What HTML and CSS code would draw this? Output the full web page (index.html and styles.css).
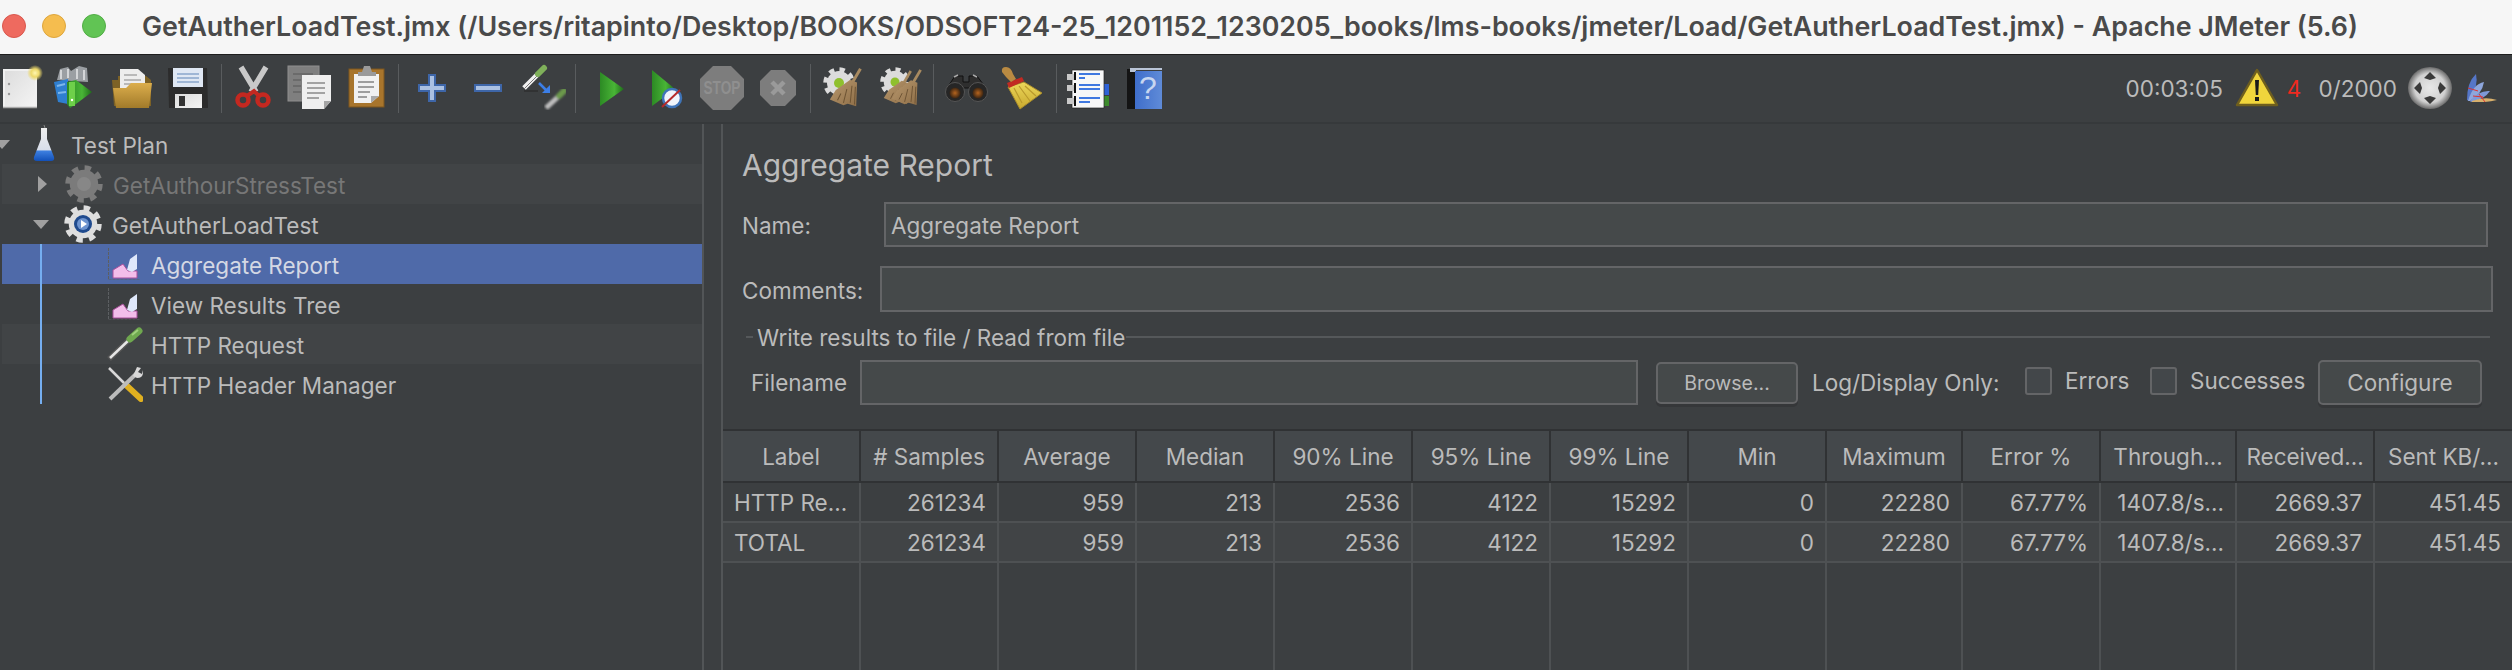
FILE: index.html
```html
<!DOCTYPE html>
<html lang="en">
<head>
  <meta charset="UTF-8" />
  <title>GetAutherLoadTest.jmx - Apache JMeter (5.6)</title>
  <link rel="stylesheet" href="styles.css">
</head>
<body>

  <!-- shared gradients and repeated icons -->
  <svg class="defs" width="0" height="0" aria-hidden="true">
    <defs>
      <linearGradient id="gPaper" x1="0" y1="0" x2="1" y2="1"><stop offset="0" stop-color="#dcdcdc"/><stop offset="1" stop-color="#f4f4f4"/></linearGradient>
      <linearGradient id="gFolder" x1="0" y1="0" x2="0" y2="1"><stop offset="0" stop-color="#dcae4c"/><stop offset="1" stop-color="#a17a2a"/></linearGradient>
      <linearGradient id="gGreen" x1="0" y1="0" x2="1" y2="0"><stop offset="0" stop-color="#2c8a24"/><stop offset=".6" stop-color="#49b536"/><stop offset="1" stop-color="#1e6a1a"/></linearGradient>
      <linearGradient id="gBook" x1="0" y1="0" x2="1" y2="0"><stop offset="0" stop-color="#3f6ecb"/><stop offset="1" stop-color="#5f8bd8"/></linearGradient>
      <linearGradient id="gBristle" x1="0" y1="0" x2="0" y2="1"><stop offset="0" stop-color="#ecd75a"/><stop offset="1" stop-color="#c9a92e"/></linearGradient>
      <linearGradient id="gWood" x1="0" y1="0" x2="1" y2="1"><stop offset="0" stop-color="#b8986e"/><stop offset="1" stop-color="#8f6f48"/></linearGradient>
      <linearGradient id="gFlask" x1="0" y1="0" x2="0" y2="1"><stop offset="0" stop-color="#eeeeee"/><stop offset=".66" stop-color="#d8deea"/><stop offset=".7" stop-color="#3d7fe0"/><stop offset="1" stop-color="#1250b8"/></linearGradient>
      <radialGradient id="gGlow"><stop offset="0" stop-color="#fff6b0"/><stop offset=".5" stop-color="#ecd86a"/><stop offset="1" stop-color="#ecd86a" stop-opacity="0"/></radialGradient>
      <radialGradient id="gDisc"><stop offset="0" stop-color="#e8e8e8"/><stop offset=".7" stop-color="#d0d0d0"/><stop offset="1" stop-color="#6a6a6a"/></radialGradient>
      <radialGradient id="gLens"><stop offset="0" stop-color="#b5641e"/><stop offset="1" stop-color="#3a2412"/></radialGradient>
      <filter id="fBlur"><feGaussianBlur stdDeviation=".9"/></filter>

      <symbol id="iChart" viewBox="0 0 32 32">
        <path d="M.5 0V32H32" fill="none" stroke="#5c5f62" stroke-width="1" stroke-dasharray="3 1"/>
        <path d="M5 22 15 16 20 23H29V30H5Z" fill="#f2bdea" stroke="#a94f9c" stroke-width="1"/>
        <path d="M19 22 22 11 29 6V21L24 24Z" fill="#dfe8fb"/>
      </symbol>
      <symbol id="iPipette" viewBox="0 0 36 36">
        <path d="M2 33 24 12" stroke="#555" stroke-width="5.500"/>
        <path d="M3 32 24 12" stroke="#e6e6e6" stroke-width="2.500"/>
        <path d="M23 13 32 5" stroke="#6fa84f" stroke-width="7" stroke-linecap="round"/>
        <path d="M25 9 31 4" stroke="#9fcf7c" stroke-width="2"/>
      </symbol>
      <symbol id="iGear" viewBox="0 0 36 36">
        <circle cx="18" cy="18" r="15" fill="none" stroke="currentColor" stroke-width="5.500" stroke-dasharray="5.9 5.9"/>
        <circle cx="18" cy="18" r="13.500" fill="currentColor"/>
      </symbol>
      <symbol id="iBroom" viewBox="0 0 40 46">
        <path d="M27 18 37 1" stroke="#a88a60" stroke-width="3.500"/>
        <path d="M8 26 25 14 33 17 32 45 22 42 17 44 1 37Z" fill="url(#gWood)"/>
        <path d="M14 30 10 38M21 25 17 41M27 21 25 41M31 22 30 43" stroke="#6e5434" stroke-width="1.200" fill="none"/>
      </symbol>
    </defs>
  </svg>

  <header class="titlebar">
    <span class="light red"></span>
    <span class="light yellow"></span>
    <span class="light green"></span>
    <span class="window-title">GetAutherLoadTest.jmx (/Users/ritapinto/Desktop/BOOKS/ODSOFT24-25_1201152_1230205_books/lms-books/jmeter/Load/GetAutherLoadTest.jmx) - Apache JMeter (5.6)</span>
  </header>

  <div class="toolbar">
    <div class="tools first">
      <svg class="tool" viewBox="0 0 58 60"><rect x="16" y="12" width="32" height="37" fill="url(#gPaper)" stroke="#f0f0f0" stroke-width="2"/><path d="M15 49.500H49" stroke="#aaa" stroke-width="1.500"/><circle cx="21" cy="26" r="1.200" fill="#999"/><circle cx="21" cy="36" r="1.200" fill="#999"/><circle cx="47" cy="15" r="8" fill="url(#gGlow)"/></svg>
      <svg class="tool" viewBox="0 0 58 60"><path d="M11 22 14 11 22 9 25 13 33 8 41 10 42 24Z" fill="#9b9fa3"/><path d="M15 12V21M22 11V20M31 11V21M38 12V22" stroke="#d4d6d8" stroke-width="2"/><path d="M8 24 22 21V46L12 44Z" fill="#2f7fd0"/><path d="M11 28 19 26M12 35 20 34" stroke="#7db6ea" stroke-width="2"/><path d="M21 24 30 22 46 34 30 46 24 50 21 46Z" fill="url(#gGreen)"/><rect x="23" y="24" width="6" height="24" fill="#6ed04a"/><circle cx="26" cy="42" r="1.200" fill="#fff"/></svg>
      <svg class="tool" viewBox="0 0 58 60"><path d="M8 22H14V18H42L47 22V48H10Z" fill="#7d6226"/><path d="M16 11H34L41 17V32H16Z" fill="#ededed"/><path d="M20 17H33M20 22H37M20 26H37" stroke="#a8a8a8" stroke-width="1.500"/><path d="M9 30H22L27 25H48L45 50H12Z" fill="url(#gFolder)"/></svg>
      <svg class="tool" viewBox="0 0 58 60"><path d="M6 10H45L46 50H7Z" fill="#2c2c2c"/><rect x="11" y="10" width="30" height="19" fill="#dfe7f3"/><path d="M15 16H37M15 20H37M15 24H37" stroke="#8ba6cc" stroke-width="1.300"/><path d="M13 36H40V50H13Z" fill="url(#gPaper)"/><rect x="17" y="38" width="6" height="10" fill="#333"/></svg>
    </div>
    <i class="tool-sep"></i>
    <div class="tools">
      <svg class="tool" viewBox="0 0 58 60"><path d="M18 9 33 34M43 9 28 34" stroke="#c9c9c9" stroke-width="5.500"/><circle cx="20" cy="42" r="5.500" fill="none" stroke="#c42820" stroke-width="4.500"/><circle cx="40" cy="42" r="5.500" fill="none" stroke="#c42820" stroke-width="4.500"/><path d="M24 38 31 33 36 38" fill="none" stroke="#c42820" stroke-width="4"/></svg>
      <svg class="tool" viewBox="0 0 58 60"><rect x="7" y="8" width="31" height="35" fill="#7f7f7f" stroke="#8f8f8f"/><path d="M12 16H32M12 22H20M12 28H20M12 34H20" stroke="#666" stroke-width="1.500"/><path d="M21 17H50V43L43 51H21Z" fill="#efefef"/><path d="M50 43H43V51Z" fill="#a5a5a5"/><path d="M26 25H44M26 30H44M26 35H44M26 40H38" stroke="#a3a3a3" stroke-width="1.800"/></svg>
      <svg class="tool" viewBox="0 0 58 60"><rect x="10" y="11" width="35" height="38" fill="#a8752c" stroke="#7d561f"/><path d="M15 16H40V38L32 45H15Z" fill="#f1f1f1"/><path d="M40 38H32V45Z" fill="#a9a9a9"/><path d="M19 24H35M19 29H35M19 34H31M19 39H28" stroke="#9e9e9e" stroke-width="1.800"/><path d="M19 18V14H23L25 8H31L33 14H37V18Z" fill="#9a9a9a"/></svg>
    </div>
    <i class="tool-sep"></i>
    <div class="tools">
      <svg class="tool" viewBox="0 0 58 60"><path d="M29 17H35V27H45V33H35V43H29V33H19V27H29Z" fill="#abc1e2" stroke="#3e66a8" stroke-width="2"/></svg>
      <svg class="tool" viewBox="0 0 58 60"><rect x="17" y="27" width="26" height="6" fill="#abc1e2" stroke="#3e66a8" stroke-width="2"/></svg>
      <svg class="tool" viewBox="0 0 58 60"><path d="M8 30 22 16" stroke="#f0f0f0" stroke-width="5"/><path d="M8 31 21 18" stroke="#777" stroke-width="1"/><path d="M22 16 28 10" stroke="#7fb05a" stroke-width="6" stroke-linecap="round"/><path d="M8 33H22" stroke="#2b2b2b" stroke-width="2" opacity=".6"/><path d="M23 25 31 33" stroke="#3c7fe8" stroke-width="2.500"/><path d="M26 35H34V27Z" fill="#3c7fe8"/><g filter="url(#fBlur)"><path d="M30 50 43 38" stroke="#bdbdbd" stroke-width="5"/><path d="M43 38 48 33" stroke="#6c9a4c" stroke-width="6" stroke-linecap="round"/></g></svg>
    </div>
    <i class="tool-sep"></i>
    <div class="tools">
      <svg class="tool" viewBox="0 0 58 60"><path d="M23 14 47 31 23 48Z" fill="url(#gGreen)"/></svg>
      <svg class="tool" viewBox="0 0 58 60"><path d="M17 12 40 31 17 48Z" fill="url(#gGreen)"/><circle cx="37" cy="40" r="9" fill="#f0f4fa" stroke="#3f74b8" stroke-width="2.500"/><path d="M27 49 45 32" stroke="#b52a2a" stroke-width="2"/></svg>
      <svg class="tool" viewBox="0 0 58 60"><path d="M20 8H38L51 21V39L38 52H20L7 39V21Z" fill="#7d7d7d"/><text class="stop-text" x="29" y="36" textLength="37" lengthAdjust="spacingAndGlyphs">STOP</text></svg>
      <svg class="tool" viewBox="0 0 58 60"><path d="M20 12H34L45 23V37L34 48H20L9 37V23Z" fill="#7d7d7d"/><path d="M21 24 33 36M33 24 21 36" stroke="#9a9a9a" stroke-width="4.500"/></svg>
    </div>
    <i class="tool-sep"></i>
    <div class="tools wide">
      <svg class="tool" viewBox="0 0 60 60"><use href="#iGear" x="11" y="9" width="32" height="32" color="#dcdcdc"/><circle cx="27" cy="25" r="5" fill="#8fc02e"/><use href="#iBroom" x="17" y="7" width="34" height="45"/></svg>
      <svg class="tool" viewBox="0 0 60 60"><use href="#iGear" x="8" y="9" width="30" height="30" color="#dcdcdc"/><circle cx="23" cy="24" r="4.500" fill="#8fc02e"/><use href="#iBroom" x="11" y="7" width="30" height="45"/><use href="#iBroom" x="19" y="7" width="32" height="45"/></svg>
    </div>
    <i class="tool-sep"></i>
    <div class="tools wide">
      <svg class="tool" viewBox="0 0 60 60"><path d="M12 30 20 18H28V24H34V18H42L51 30Z" fill="#2e2e2e" stroke="#111"/><path d="M19 19 23 17M38 17 42 19" stroke="#aaa" stroke-width="1.500"/><circle cx="20" cy="34" r="9.500" fill="#262626" stroke="#555"/><circle cx="43" cy="34" r="9.500" fill="#262626" stroke="#555"/><circle cx="20" cy="35" r="5.500" fill="url(#gLens)"/><circle cx="43" cy="35" r="5.500" fill="url(#gLens)"/></svg>
      <svg class="tool" viewBox="0 0 60 60"><path d="M25 51 47 35 29 24 13 29Z" fill="url(#gBristle)" stroke="#a98c2a"/><path d="M19 30 27 45M24 28 35 43M30 28 41 38" stroke="#b9992c" stroke-width="1.200"/><path d="M12 25 27 19 29 23 14 30Z" fill="#c22a22"/><path d="M7 14Q6 9 11 9 16 9 18 16L21 21 16 24 11 19Z" fill="#b98a42"/></svg>
    </div>
    <i class="tool-sep"></i>
    <div class="tools wide">
      <svg class="tool" viewBox="0 0 60 60"><rect x="46" y="26" width="5" height="11" fill="#2f62d6"/><rect x="46" y="38" width="5" height="10" fill="#3c8a2c"/><rect x="14" y="12" width="32" height="38" fill="#f7f7f7"/><path d="M14 12H46V50H14Z" fill="none" stroke="#222" stroke-width=".7"/><rect x="9" y="16" width="8" height="6" fill="#c9c9c9"/><rect x="9" y="27" width="8" height="6" fill="#c9c9c9"/><rect x="9" y="40" width="8" height="6" fill="#c9c9c9"/><path d="M17 14V22M17 25V35M17 38V48" stroke="#111" stroke-width="2"/><path d="M21 16H42M21 20H27M21 27H42M21 31H42M21 40H42M21 44H32" stroke="#3f78e0" stroke-width="2"/></svg>
      <svg class="tool" viewBox="0 0 60 60"><rect x="9" y="11" width="9" height="40" fill="#141414"/><path d="M12 10H44V12H18V14H12Z" fill="#b9c4d6"/><rect x="17" y="13" width="27" height="38" fill="url(#gBook)"/><text class="help-text" x="30" y="41">?</text></svg>
    </div>

    <div class="status">
      <span class="timer">00:03:05</span>
      <svg class="warn-icon" viewBox="0 0 44 40"><path d="M22 2 42 37H2Z" fill="#f0d53c" stroke="#6e5e1e" stroke-width="2.500" stroke-linejoin="round"/><path d="M20 12H24L23.200 27H20.800Z" fill="#1a1a1a"/><rect x="20" y="29" width="4" height="4" fill="#1a1a1a"/></svg>
      <span class="err-count">4</span>
      <span class="threads">0/2000</span>
      <svg class="loop-icon" viewBox="0 0 44 42"><ellipse cx="22" cy="21" rx="22" ry="21" fill="url(#gDisc)"/><path d="M22 5 28 11 22 13 16 11ZM22 37 28 31 22 29 16 31ZM6 21 12 15 14 21 12 27ZM38 21 32 15 30 21 32 27Z" fill="#3a3a3a"/></svg>
      <svg class="feather-icon" viewBox="0 0 32 28"><path d="M2 26Q2 8 11 0 14 12 4 27Z" fill="#5576c8"/><path d="M3 27Q8 10 19 8 17 20 5 27Z" fill="#8ea6dc"/><path d="M5 27Q14 16 25 17 20 25 6 28Z" fill="#7f99d8"/><path d="M7 27Q20 22 32 26 20 29 7 28Z" fill="#d8b06c"/><path d="M3 14 13 17M8 22 18 23M14 20 20 28" stroke="#d33" stroke-width="1"/></svg>
    </div>
  </div>

  <main class="workspace">
    <nav class="tree">
      <div class="row root">
        <i class="arrow-down clipped"></i>
        <svg class="flask" viewBox="0 0 24 38"><path d="M12 0 13 3" stroke="#888" stroke-width="1"/><path d="M9 3H15V14L22 32Q23 36 19 36H5Q1 36 2 32L9 14Z" fill="url(#gFlask)"/></svg>
        <span>Test Plan</span>
      </div>
      <div class="row alt disabled">
        <i class="arrow-right"></i>
        <svg class="gear" viewBox="0 0 38 38"><use href="#iGear" width="38" height="38" color="#7b7b7b"/><circle cx="19" cy="19" r="7" fill="#878787"/></svg>
        <span>GetAuthourStressTest</span>
      </div>
      <div class="row">
        <i class="arrow-down"></i>
        <svg class="gear" viewBox="0 0 38 38"><use href="#iGear" width="38" height="38" color="#dedede"/><circle cx="19" cy="19" r="9" fill="#1f4a8e"/><circle cx="19" cy="19" r="6" fill="#6d93cf"/><path d="M17 15 23 19 17 23Z" fill="#fff"/></svg>
        <span>GetAutherLoadTest</span>
      </div>
      <div class="children">
        <div class="row leaf selected">
          <svg class="leaf-icon chart"><use href="#iChart"/></svg>
          <span>Aggregate Report</span>
        </div>
        <div class="row leaf">
          <svg class="leaf-icon chart"><use href="#iChart"/></svg>
          <span>View Results Tree</span>
        </div>
        <div class="row leaf alt">
          <svg class="leaf-icon"><use href="#iPipette"/></svg>
          <span>HTTP Request</span>
        </div>
        <div class="row leaf">
          <svg class="leaf-icon" viewBox="0 0 36 36"><path d="M2 2 21 21" stroke="#d8d8d8" stroke-width="2.500"/><path d="M19 19 34 33" stroke="#e0b020" stroke-width="6" stroke-linecap="round"/><path d="M30 7 3 33" stroke="#bcbcbc" stroke-width="4"/><path d="M26 10 30 1 34 2 31 6 35 8 36 4Q37 12 30 12Z" fill="#d8d8d8"/></svg>
          <span>HTTP Header Manager</span>
        </div>
      </div>
    </nav>

    <section class="panel">
      <div class="form">
        <h1>Aggregate Report</h1>
        <div class="field name-field">
          <label>Name:</label>
          <div class="input">Aggregate Report</div>
        </div>
        <div class="field comments-field">
          <label>Comments:</label>
          <div class="input"></div>
        </div>
        <div class="group-title"><span>Write results to file / Read from file</span></div>
        <div class="file-row">
          <label class="file-label">Filename</label>
          <div class="input file-input"></div>
          <button class="btn browse">Browse...</button>
          <span class="only-label">Log/Display Only:</span>
          <span class="check"></span><span class="check-label errors-label">Errors</span>
          <span class="check"></span><span class="check-label success-label">Successes</span>
          <button class="btn configure">Configure</button>
        </div>
      </div>

      <table class="report">
        <thead>
          <tr>
            <th>Label</th><th># Samples</th><th>Average</th><th>Median</th><th>90% Line</th><th>95% Line</th><th>99% Line</th><th>Min</th><th>Maximum</th><th>Error %</th><th>Through...</th><th>Received...</th><th>Sent KB/...</th>
          </tr>
        </thead>
        <tbody>
          <tr>
            <td class="txt">HTTP Re...</td><td>261234</td><td>959</td><td>213</td><td>2536</td><td>4122</td><td>15292</td><td>0</td><td>22280</td><td>67.77%</td><td>1407.8/s...</td><td>2669.37</td><td>451.45</td>
          </tr>
          <tr class="alt">
            <td class="txt">TOTAL</td><td>261234</td><td>959</td><td>213</td><td>2536</td><td>4122</td><td>15292</td><td>0</td><td>22280</td><td>67.77%</td><td>1407.8/s...</td><td>2669.37</td><td>451.45</td>
          </tr>
          <tr class="filler">
            <td></td><td></td><td></td><td></td><td></td><td></td><td></td><td></td><td></td><td></td><td></td><td></td><td></td>
          </tr>
        </tbody>
      </table>
    </section>
  </main>

</body>
</html>
```

FILE: styles.css
```css
* { margin:0; padding:0; box-sizing:border-box; }
html, body { width:2512px; height:670px; overflow:hidden; }
body { background:#3c3f41; color:#bbbbbb; font-family:Inter,"Liberation Sans",sans-serif; font-size:22.5px; display:flex; flex-direction:column; }
.defs { position:absolute; }

/* title bar */
.titlebar { height:55px; flex:none; display:flex; align-items:center; background:#f6f6f6; border-bottom:1px solid #1e1e1e; padding:0 0 2px 2px; }
.light { width:24px; height:24px; border-radius:50%; margin-right:16px; flex:none; }
.light.red { background:#ee6a5f; border:1px solid #d9574d; }
.light.yellow { background:#f5bd4f; border:1px solid #dea63c; }
.light.green { background:#61c454; border:1px solid #51ad45; }
.window-title { margin-left:20px; font-size:26.8px; font-weight:600; color:#4a4a4a; white-space:nowrap; }

/* toolbar */
.toolbar { height:69px; flex:none; display:flex; align-items:flex-start; padding-top:3px; background:#3c3f41; border-bottom:2px solid #36393b; }
.tools { display:flex; }
.tools.first { margin-left:-12px; }
.tool { width:58px; height:60px; flex:none; display:block; }
.tools.wide .tool { width:60px; }
.tool-sep { width:1px; height:49px; margin:6px 1px 0; background:#595c5e; flex:none; }
.stop-text { font:700 18px "Liberation Sans",sans-serif; fill:#8f8f8f; text-anchor:middle; }
.help-text { font:400 32px "Liberation Sans",sans-serif; fill:#c7d6f0; text-anchor:middle; }
.status { margin-left:auto; display:flex; align-items:center; height:60px; padding-right:15px; }
.timer { color:#bbb; margin-right:12px; }
.warn-icon { width:44px; height:40px; margin-right:8px; }
.err-count { color:#ee2a1f; margin-right:17px; }
.threads { margin-right:11px; }
.loop-icon { width:44px; height:42px; margin-right:13px; }
.feather-icon { width:32px; height:28px; }

.workspace { flex:1; display:flex; min-height:0; }

/* tree */
.tree { width:704px; flex:none; padding-left:2px; border-right:2px solid #525557; }
.row { height:40px; display:flex; align-items:center; white-space:nowrap; position:relative; }
.row span { padding-top:2px; }
.row.alt { background:#414446; }
.row.disabled { color:#777; }
.row.selected { background:#4f6aa9; color:#d4d8e4; }
.arrow-down { width:0; height:0; margin-left:31px; border-left:8px solid transparent; border-right:8px solid transparent; border-top:9px solid #a0a0a0; }
.arrow-down.clipped { margin-left:-8px; }
.arrow-right { width:0; height:0; margin-left:36px; border-top:8px solid transparent; border-bottom:8px solid transparent; border-left:9px solid #a0a0a0; }
.flask { width:24px; height:38px; margin-left:22px; margin-right:15px; }
.gear { width:38px; height:38px; margin-left:15px; margin-right:10px; }
.arrow-right + .gear { margin-left:18px; }
.children { position:relative; }
.children::before { content:""; position:absolute; left:38px; top:0; bottom:0; width:2px; background:#75aef0; z-index:1; }
.leaf { padding-left:105px; }
.leaf-icon { width:36px; height:36px; margin-right:8px; }
.leaf-icon.chart { width:32px; height:32px; margin-left:1px; margin-right:11px; }

/* right panel */
.panel { flex:1; min-width:0; margin-left:17px; border-left:2px solid #525557; display:flex; flex-direction:column; overflow:hidden; }
.form { padding:21px 19px 0 19px; height:305px; flex:none; }
h1 { font-size:30px; font-weight:400; height:40px; line-height:40px; color:#bbb; margin-bottom:17px; }
.field { display:flex; align-items:center; }
.field label { flex:none; padding-top:2px; }
.input { height:45px; border:2px solid #646567; background:#45494a; flex:1; line-height:43px; padding-left:5px; }
.name-field { margin-right:5px; }
.name-field label { width:142px; }
.comments-field { margin-top:19px; }
.comments-field label { width:138px; }
.comments-field .input { height:46px; }
.group-title { display:flex; align-items:center; height:24px; margin:13px 3px 11px 4px; }
.group-title::before { content:""; width:7px; height:2px; background:#55585a; margin-right:4px; }
.group-title::after { content:""; flex:1; height:2px; background:#55585a; }
.group-title span { margin-right:1px; }
.file-row { display:flex; align-items:center; height:45px; padding-left:9px; }
.file-label { width:109px; flex:none; }
.file-input { flex:none; width:778px; }
.btn { font:inherit; color:#bbb; background:#45494a; border:2px solid #646567; border-radius:5px; box-shadow:0 3px 0 #353739; flex:none; }
.browse { width:142px; height:42px; margin-left:18px; font-size:19.5px; }
.only-label { margin-left:14px; width:213px; flex:none; }
.check { width:27px; height:28px; flex:none; border:2px solid #646567; border-radius:3px; background:#43474a; margin-top:-4px; }
.check-label { margin-left:13px; margin-top:-4px; flex:none; }
.errors-label { width:85px; }
.success-label { width:128px; }
.configure { width:164px; height:45px; }

/* results table */
.report { width:1789px; flex:1; table-layout:fixed; border-collapse:separate; border-spacing:0; border-top:2px solid #303234; }
.report th { width:138px; height:52px; font-weight:400; background:#44484b; border-right:2px solid #303234; border-bottom:2px solid #303234; }
.report th:nth-child(9), .report th:nth-child(11) { width:136px; }
.report th:last-child { width:137px; }
.report td { height:40px; text-align:right; padding-right:11px; border-right:2px solid #4e5153; border-bottom:2px solid #4e5153; white-space:nowrap; overflow:hidden; }
.report td.txt { text-align:left; padding-left:11px; padding-right:0; }
.report tr.alt td { background:#414446; }
.report tr.filler td { height:auto; border-bottom:0; }
.report th:last-child, .report td:last-child { border-right:0; }
```
